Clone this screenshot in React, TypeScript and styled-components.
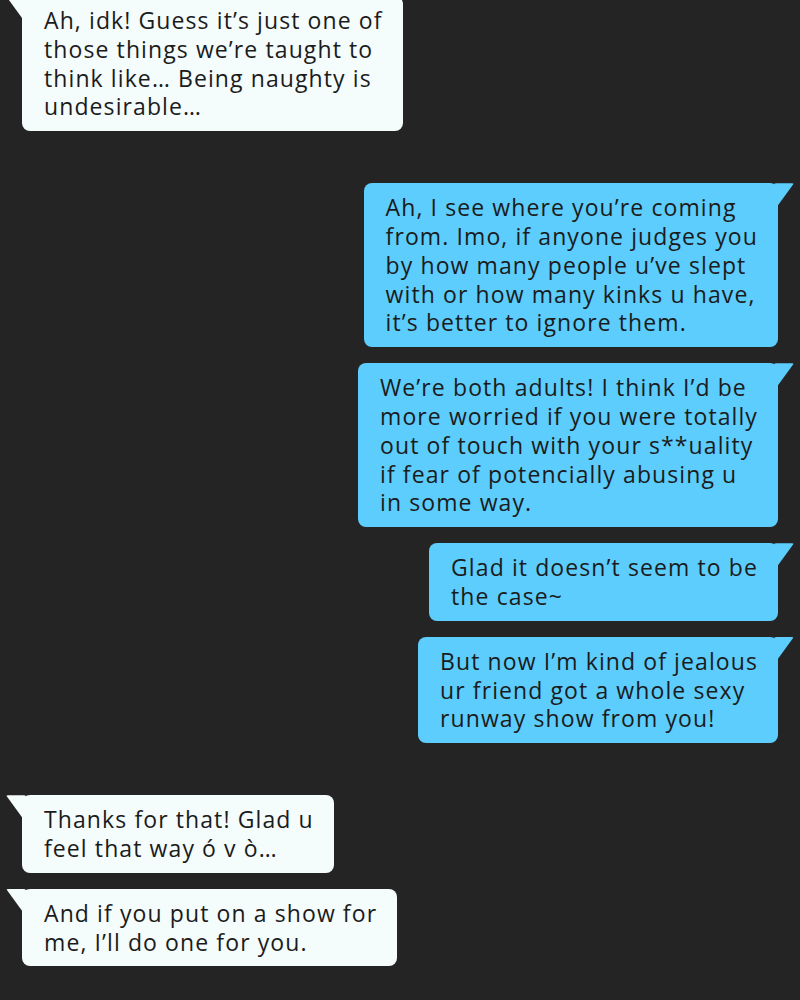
import React from 'react';
import styled, { createGlobalStyle } from 'styled-components';

const GlobalStyle = createGlobalStyle`
  html, body {
    margin: 0;
    background: #242424;
  }
`;

type Side = 'left' | 'right';

const Thread = styled.div`
  width: 800px;
  height: 1000px;
  box-sizing: border-box;
  padding: 0 22px;
  display: flex;
  flex-direction: column;
  background: #242424;
  overflow: hidden;
  font-family: 'Open Sans', 'Liberation Sans', sans-serif;
`;

const Group = styled.div<{ $side: Side }>`
  display: flex;
  flex-direction: column;
  align-items: ${({ $side }) => ($side === 'left' ? 'flex-start' : 'flex-end')};
  gap: 16px;
  margin-bottom: 52px;

  &:first-child {
    margin-top: -4px;
  }
`;

const Bubble = styled.div<{ $side: Side }>`
  position: relative;
  box-sizing: border-box;
  padding: 10px 20px 10px 22px;
  border-radius: 8px;
  background: ${({ $side }) => ($side === 'left' ? '#f4fcfc' : '#5ccdfc')};
  color: #1b1b1b;
  font-size: 23px;
  line-height: 28.8px;
  letter-spacing: 1.1px;

  /* little tail in the top corner */
  &::before {
    content: '';
    position: absolute;
    top: 0;
    ${({ $side }) => ($side === 'left' ? 'left: -16px;' : 'right: -16px;')}
    width: 20px;
    height: 22px;
    background: inherit;
    border-radius: 2px 2px 0 0;
    clip-path: ${({ $side }) =>
      $side === 'left'
        ? 'polygon(0 0, 100% 0, 100% 100%, 80% 100%)'
        : 'polygon(0 0, 100% 0, 20% 100%, 0 100%)'};
  }
`;

const Line = styled.span`
  display: block;
  white-space: nowrap;
`;

const messages: { side: Side; lines: string[] }[][] = [
  [
    {
      side: 'left',
      lines: [
        'Ah, idk! Guess it’s just one of',
        'those things we’re taught to',
        'think like… Being naughty is',
        'undesirable…',
      ],
    },
  ],
  [
    {
      side: 'right',
      lines: [
        'Ah, I see where you’re coming',
        'from. Imo, if anyone judges you',
        'by how many people u’ve slept',
        'with or how many kinks u have,',
        'it’s better to ignore them.',
      ],
    },
    {
      side: 'right',
      lines: [
        'We’re both adults! I think I’d be',
        'more worried if you were totally',
        'out of touch with your s**uality',
        'if fear of potencially abusing u',
        'in some way.',
      ],
    },
    { side: 'right', lines: ['Glad it doesn’t seem to be', 'the case~'] },
    {
      side: 'right',
      lines: [
        'But now I’m kind of jealous',
        'ur friend got a whole sexy',
        'runway show from you!',
      ],
    },
  ],
  [
    { side: 'left', lines: ['Thanks for that! Glad u', 'feel that way ó v ò…'] },
    { side: 'left', lines: ['And if you put on a show for', 'me, I’ll do one for you.'] },
  ],
];

const App: React.FC = () => {
  return (
    <>
      <GlobalStyle />
      <Thread>
        {messages.map((group, gi) => (
          <Group key={gi} $side={group[0].side}>
            {group.map((msg, mi) => (
              <Bubble key={mi} $side={msg.side}>
                {msg.lines.map((l, li) => (
                  <Line key={li}>{l}</Line>
                ))}
              </Bubble>
            ))}
          </Group>
        ))}
      </Thread>
    </>
  );
};

export default App;
